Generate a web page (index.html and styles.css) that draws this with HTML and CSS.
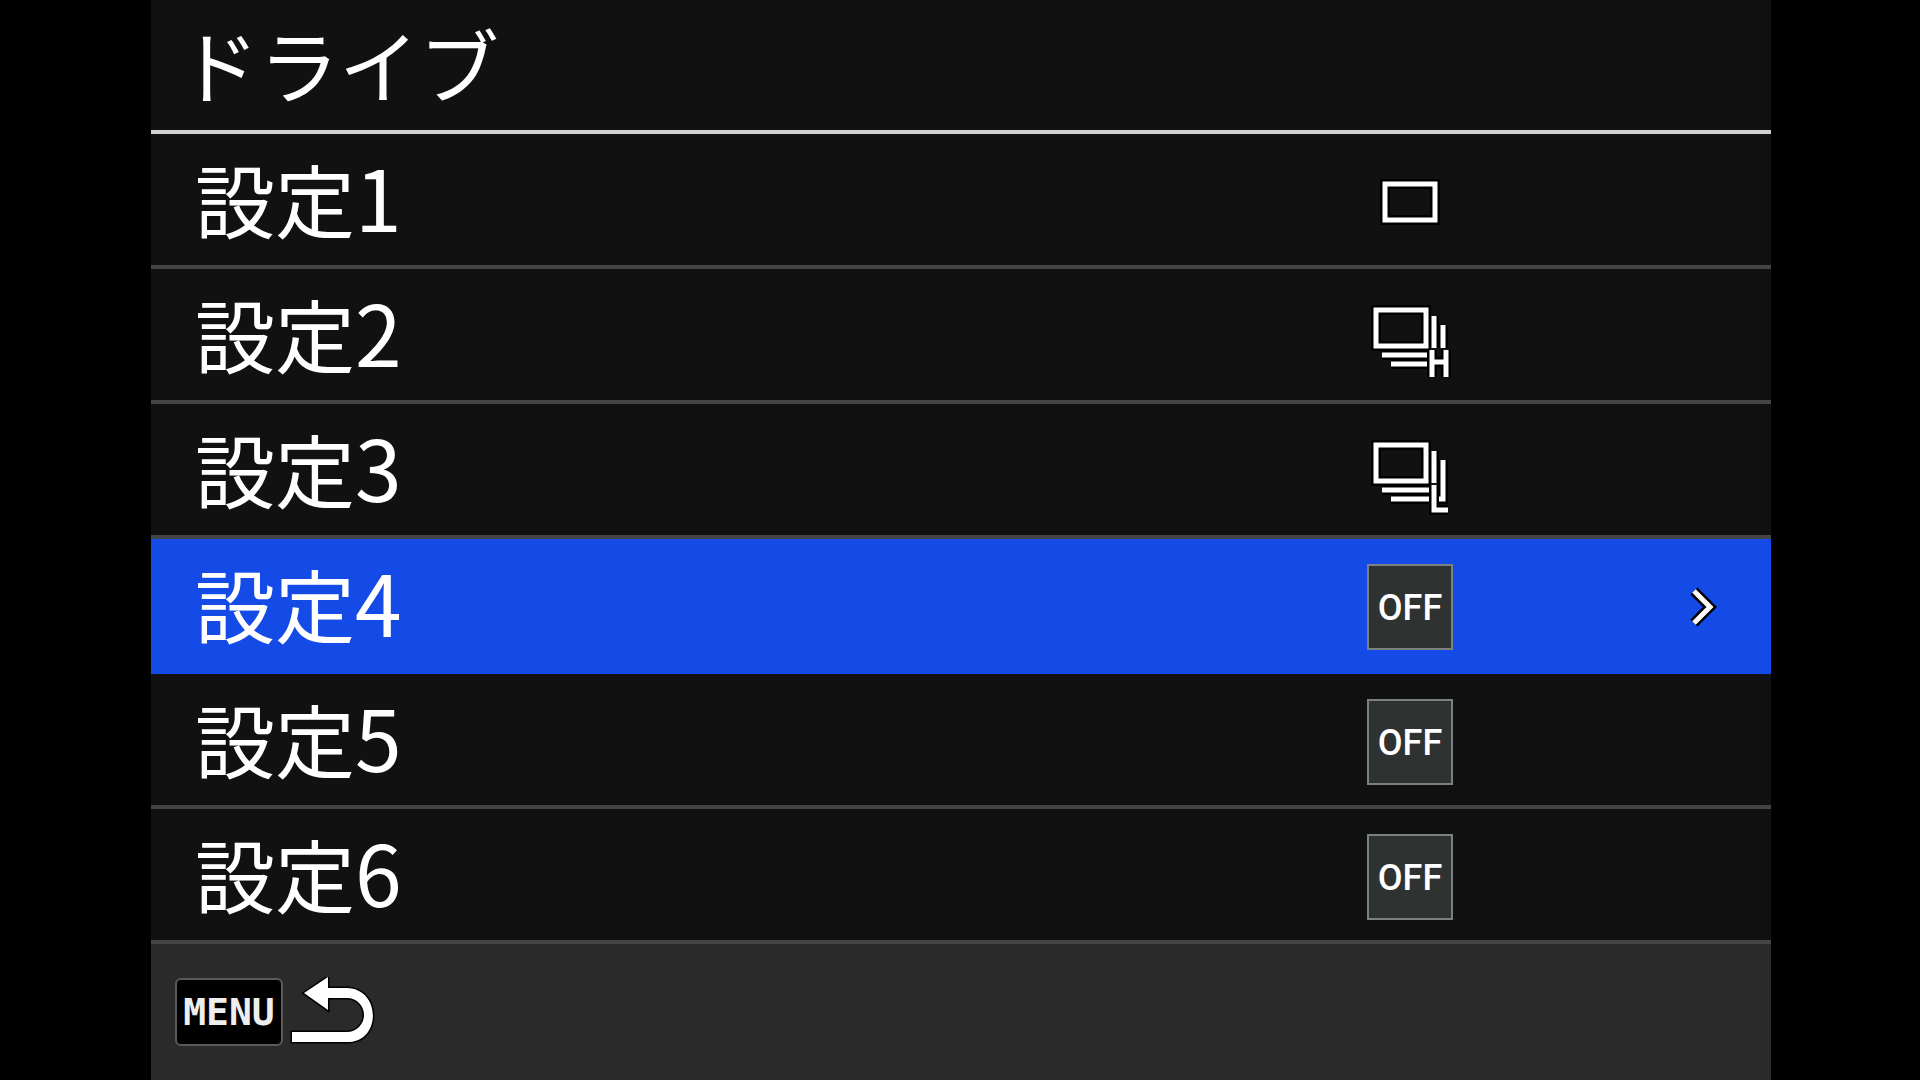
FILE: index.html
```
<!DOCTYPE html>
<html lang="ja">
<head>
    <meta charset="UTF-8">
    <meta name="viewport" content="width=device-width, initial-scale=1.0">
    <title>ドライブ</title>
    <link rel="stylesheet" href="styles.css">
</head>
<body>

<div class="screen">
    <header class="title-bar">
        <h1>ドライブ</h1>
    </header>

    <main class="menu">
        <button class="row" type="button">
            <span class="label">設定<span class="num">1</span></span>
            <svg class="icon" viewBox="0 0 86 86">
                <rect class="edge" x="18" y="25" width="50" height="36"/>
                <rect class="line" x="18" y="25" width="50" height="36"/>
            </svg>
        </button>
        <button class="row" type="button">
            <span class="label">設定<span class="num">2</span></span>
            <svg class="icon" viewBox="0 0 86 86">
                <path class="edge" d="M9 16h50v36h-50zM67 22v32M76 31v23M15 61h48M24 70h39"/>
                <path class="line" d="M9 16h50v36h-50zM67 22v32M76 31v23M15 61h48M24 70h39"/>
                <path class="edge" d="M65 56v27M79 56v27M65 68h14"/>
                <path class="line" d="M65 56v27M79 56v27M65 68h14"/>
            </svg>
        </button>
        <button class="row" type="button">
            <span class="label">設定<span class="num">3</span></span>
            <svg class="icon" viewBox="0 0 86 86">
                <path class="edge" d="M9 16h50v36h-50zM67 22v32M76 31v39h-6M15 61h48M24 70h39"/>
                <path class="line" d="M9 16h50v36h-50zM67 22v32M76 31v39h-6M15 61h48M24 70h39"/>
                <path class="edge" d="M67 56v25h14"/>
                <path class="line" d="M67 56v25h14"/>
            </svg>
        </button>
        <button class="row selected" type="button">
            <span class="label">設定<span class="num">4</span></span>
            <span class="off">OFF</span>
            <svg class="chevron" viewBox="0 0 28 42">
                <path class="edge" d="M5 5L21 21L5 37"/>
                <path class="line" d="M5 5L21 21L5 37"/>
            </svg>
        </button>
        <button class="row" type="button">
            <span class="label">設定<span class="num">5</span></span>
            <span class="off">OFF</span>
        </button>
        <button class="row" type="button">
            <span class="label">設定<span class="num">6</span></span>
            <span class="off">OFF</span>
        </button>
    </main>

    <footer class="guide">
        <button class="back" type="button">
            <span class="key">MENU</span>
            <svg class="back-arrow" viewBox="0 0 86 70" aria-label="戻る">
                <path class="arrow" d="M3 65V55H58A16 16 0 0 0 58 21H39V33L15 16L39 0V11H58C92 12 92 63 61 65z"/>
            </svg>
        </button>
    </footer>
</div>

</body>
</html>
```
FILE: styles.css
```
* {
    box-sizing: border-box;
}
body {
    margin: 0;
    background: #000;
    color: #fff;
    font-family: "Noto Sans CJK JP", sans-serif;
}
button {
    margin: 0;
    border: none;
    background: none;
    color: inherit;
    font-family: inherit;
    cursor: pointer;
}
.screen {
    display: grid;
    grid-template-rows: 134fr 810fr 136fr;
    min-height: 100vh;
    margin: 0 149px 0 151px;
    background: #111;
}
.title-bar {
    display: flex;
    align-items: center;
    padding: 0 28px 6px;
    border-bottom: 4px solid #d2d2d2;
}
h1 {
    margin: 0;
    font-size: 80px;
    font-weight: 400;
    line-height: 80px;
}
.menu {
    display: grid;
    grid-auto-rows: 1fr;
}
.row {
    display: grid;
    grid-template-columns: 1fr 86px 236px 82px;
    align-items: center;
    padding: 4px 0 0 44px;
    border-bottom: 4px solid #444;
    text-align: left;
}
.row.selected {
    border-bottom-color: #144be6;
    background: #144be6;
}
.label {
    padding-bottom: 10px;
    font-size: 80px;
    font-weight: 400;
    line-height: 80px;
}
.num {
    font-size: 84px;
}
.icon {
    width: 86px;
    height: 86px;
}
.edge, .line {
    fill: none;
    stroke: #fff;
    stroke-width: 5;
}
.edge {
    stroke: #000;
    stroke-width: 10;
}
.off {
    height: 86px;
    border: 2px solid #7b8080;
    background: #2e3231;
    font-family: Roboto, sans-serif;
    font-size: 36px;
    font-weight: 500;
    line-height: 84px;
    text-align: center;
}
.chevron {
    grid-column: 4;
    width: 28px;
    height: 42px;
}
.guide {
    display: flex;
    align-items: center;
    padding: 0 24px;
    background: #2a2a2a;
}
.back {
    display: flex;
    align-items: center;
    gap: 6px;
    padding: 0;
}
.key {
    width: 108px;
    height: 68px;
    border: 2px solid #5a5a5a;
    border-radius: 6px;
    background: #000;
    color: #eee;
    font-family: "DejaVu Sans Mono", monospace;
    font-size: 38px;
    font-weight: bold;
    line-height: 64px;
    text-align: center;
}
.back-arrow {
    width: 86px;
    height: 70px;
}
.arrow {
    fill: #fff;
    stroke: #000;
    stroke-width: 3;
    paint-order: stroke;
}
```
